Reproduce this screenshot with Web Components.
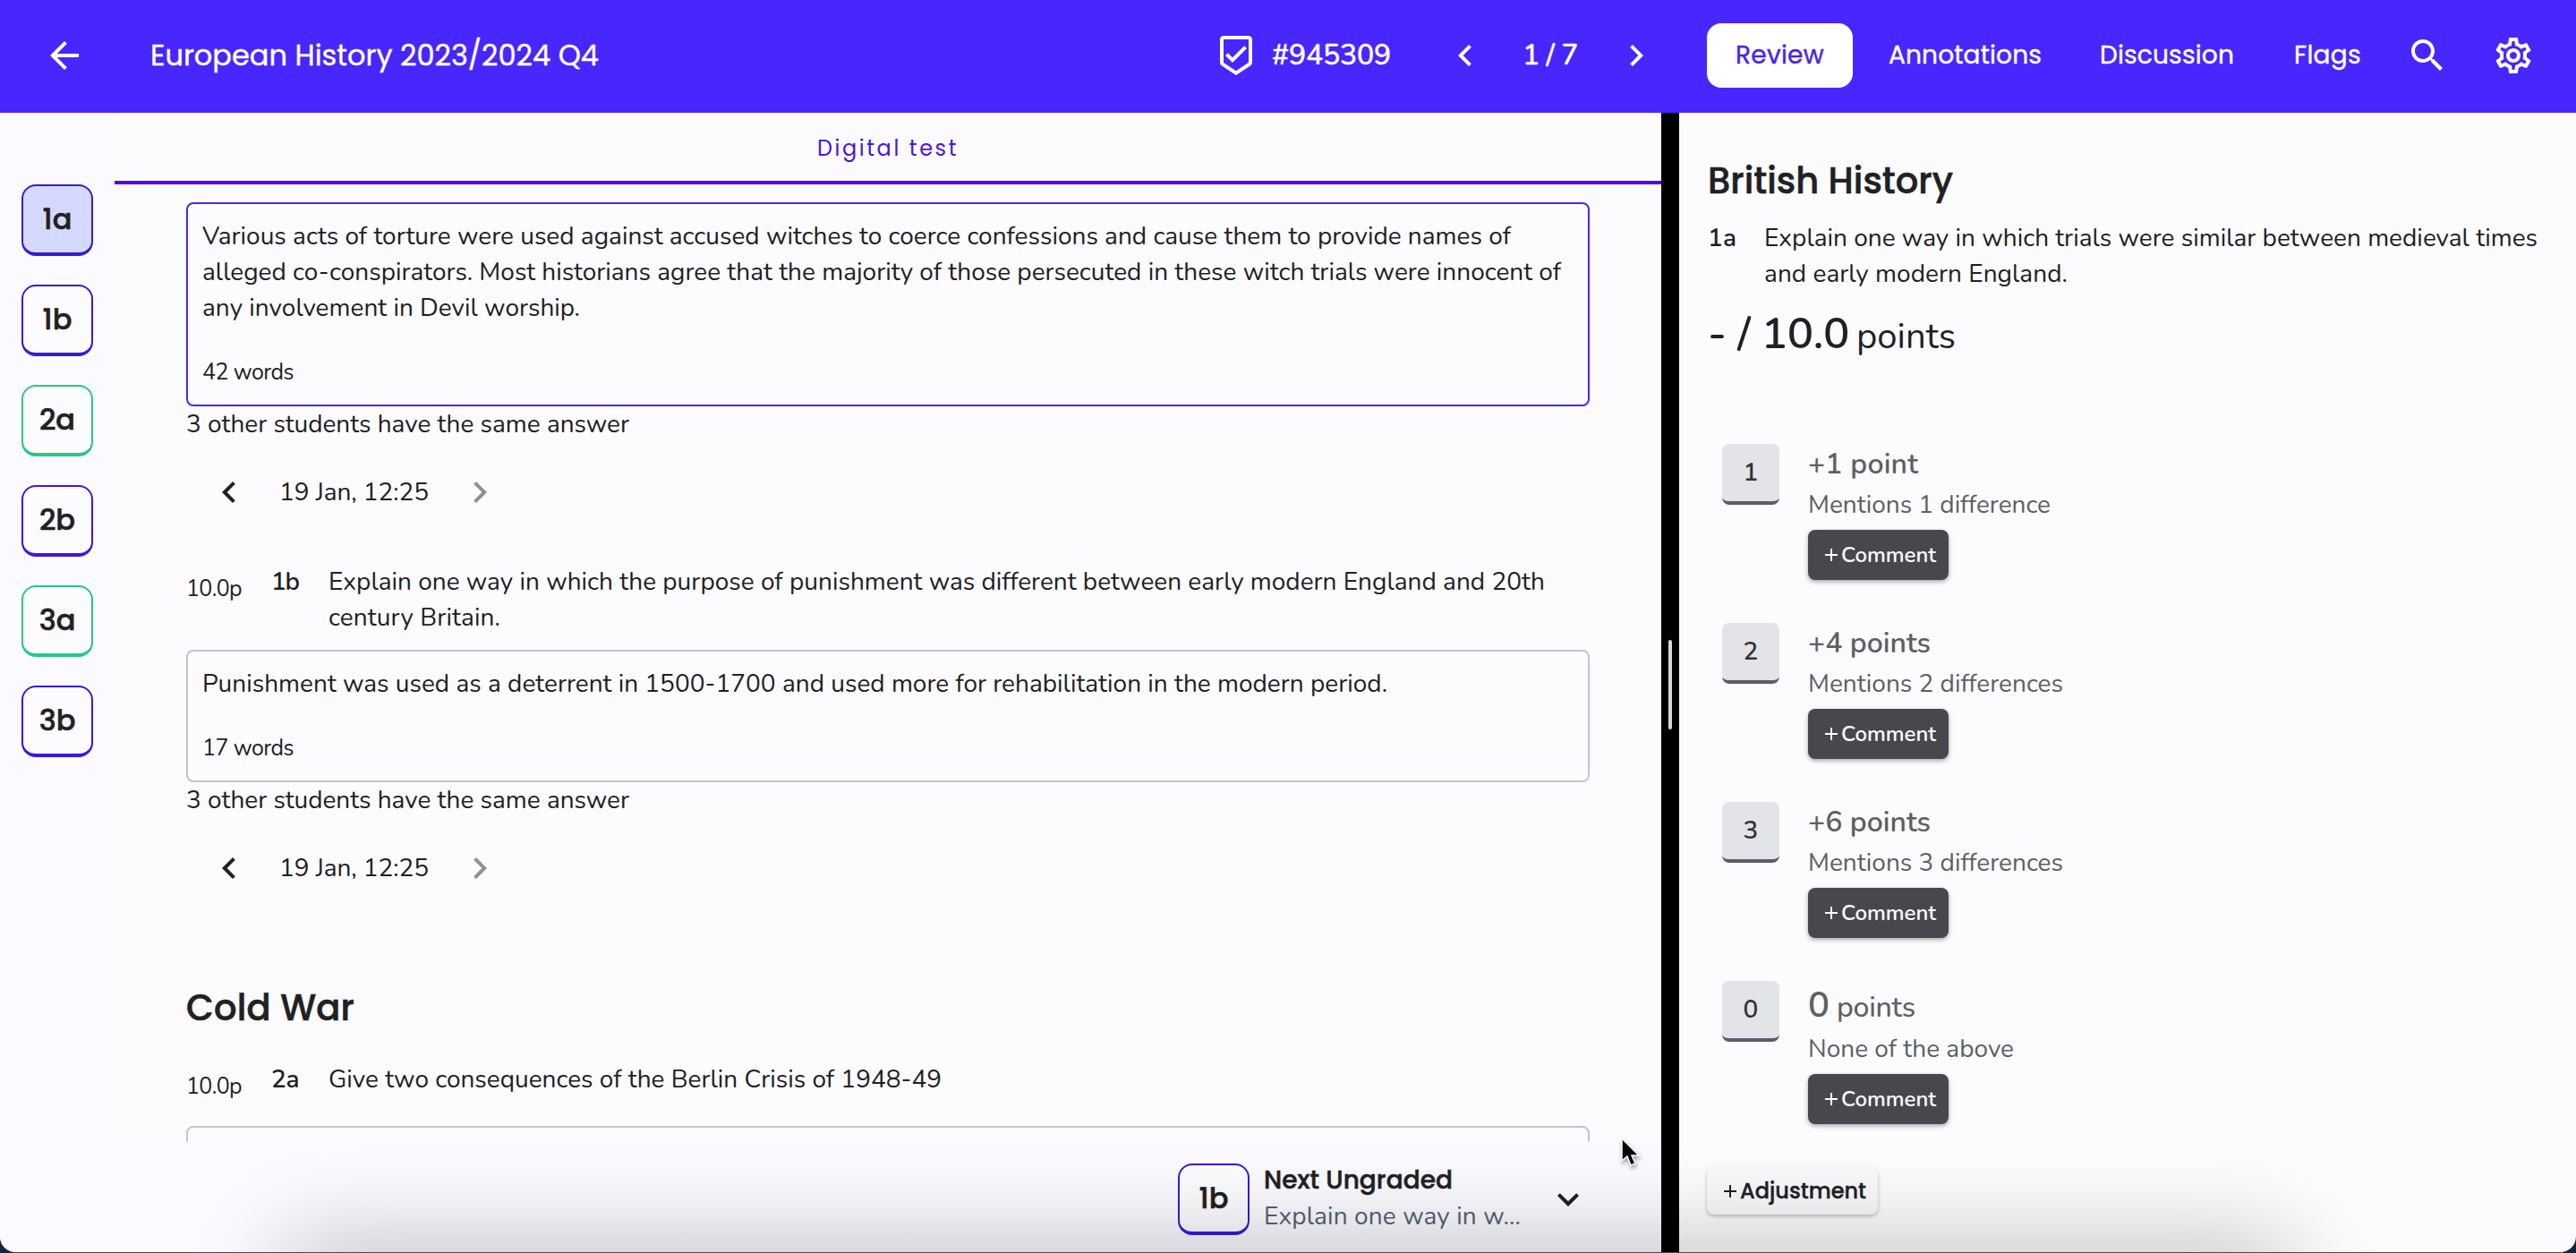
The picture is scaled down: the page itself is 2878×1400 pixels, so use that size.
<!DOCTYPE html>
<html lang="en">
<head>
<meta charset="utf-8">
<title>European History 2023/2024 Q4</title>
<style>
  :root {
    --brand: #4826ff;
    --brand-dark: #3a1ad6;
    --done: #2ac784;
    --ink: #1f2124;
    --muted: #5d6064;
    --paper: #fcfcff;
    --head: Poppins, Inter, "Liberation Sans", sans-serif;
    --text: Nunito, Lato, "Open Sans", sans-serif;
  }
  body {
    margin: 0;
    background: #10243f;
    font: 28px/40px var(--text);
    color: var(--ink);
  }
</style>
</head>
<body>
<grading-app></grading-app>

<script>
// Icon paths, all on a 24 x 24 grid
const ICONS = {
  back: 'M20 11H7.83l5.59-5.59L12 4l-8 8 8 8 1.41-1.41L7.83 13H20v-2z',
  badge: 'M19 1H5c-1.1 0-1.99.9-1.99 2L3 15.93c0 .69.35 1.3.88 1.66L12 23l8.11-5.41c.53-.36.88-.97.88-1.66L21 3c0-1.1-.9-2-2-2zm-7 19.6l-7-4.66V3h14v12.93l-7 4.67zm-2.01-7.42l-2.58-2.59L6 12l4 4 8-8-1.42-1.42z',
  left: 'M15.41 7.41L14 6l-6 6 6 6 1.41-1.41L10.83 12z',
  right: 'M10 6L8.59 7.41 13.17 12l-4.58 4.59L10 18l6-6z',
  down: 'M16.59 8.59L12 13.17 7.41 8.59 6 10l6 6 6-6z',
  search: 'M15.5 14h-.79l-.28-.27C15.41 12.59 16 11.11 16 9.5 16 5.91 13.09 3 9.5 3S3 5.91 3 9.5 5.91 16 9.5 16c1.61 0 3.09-.59 4.23-1.57l.27.28v.79l5 4.99L20.49 19l-4.99-5zm-6 0C7.01 14 5 11.99 5 9.5S7.01 5 9.5 5 14 7.01 14 9.5 11.99 14 9.5 14z',
  gear: 'M19.43 12.98c.04-.32.07-.64.07-.98s-.03-.66-.07-.98l2.11-1.65c.19-.15.24-.42.12-.64l-2-3.46c-.09-.16-.26-.25-.44-.25-.06 0-.12.01-.17.03l-2.49 1c-.52-.4-1.08-.73-1.69-.98l-.38-2.65C14.46 2.18 14.25 2 14 2h-4c-.25 0-.46.18-.49.42l-.38 2.65c-.61.25-1.17.59-1.69.98l-2.49-1c-.06-.02-.12-.03-.18-.03-.17 0-.34.09-.43.25l-2 3.46c-.13.22-.07.49.12.64l2.11 1.65c-.04.32-.07.65-.07.98s.03.66.07.98l-2.11 1.65c-.19.15-.24.42-.12.64l2 3.46c.09.16.26.25.44.25.06 0 .12-.01.17-.03l2.49-1c.52.4 1.08.73 1.69.98l.38 2.65c.03.24.24.42.49.42h4c.25 0 .46-.18.49-.42l.38-2.65c.61-.25 1.17-.59 1.69-.98l2.49 1c.06.02.12.03.18.03.17 0 .34-.09.43-.25l2-3.46c.12-.22.07-.49-.12-.64l-2.11-1.65zm-1.98-1.71c.04.31.05.52.05.73 0 .21-.02.43-.05.73l-.14 1.13.89.7 1.08.84-.7 1.21-1.27-.51-1.04-.42-.9.68c-.43.32-.84.56-1.25.73l-1.06.43-.16 1.13-.2 1.35h-1.4l-.19-1.35-.16-1.13-1.06-.43c-.43-.18-.83-.41-1.23-.71l-.91-.7-1.06.43-1.27.51-.7-1.21 1.08-.84.89-.7-.14-1.13c-.03-.31-.05-.54-.05-.74s.02-.43.05-.73l.14-1.13-.89-.7-1.08-.84.7-1.21 1.27.51 1.04.42.9-.68c.43-.32.84-.56 1.25-.73l1.06-.43.16-1.13.2-1.35h1.39l.19 1.35.16 1.13 1.06.43c.43.18.83.41 1.23.71l.91.7 1.06-.43 1.27-.51.7 1.21-1.07.85-.89.7.14 1.13zM12 8c-2.21 0-4 1.79-4 4s1.79 4 4 4 4-1.79 4-4-1.79-4-4-4zm0 6c-1.1 0-2-.9-2-2s.9-2 2-2 2 .9 2 2-.9 2-2 2z',
};

// Shared base: puts the element's template in an open shadow root
class BaseElement extends HTMLElement {
  constructor() {
    super();
    this.attachShadow({ mode: 'open' });
  }
  connectedCallback() {
    this.shadowRoot.innerHTML = this.render();
  }
}

class UiIcon extends BaseElement {
  render() {
    return `
      <style>
        :host { display: block; flex: none; width: 48px; height: 48px; }
        svg { display: block; width: 100%; height: 100%; fill: currentColor; }
      </style>
      <svg viewBox="0 0 24 24"><path d="${ICONS[this.getAttribute('name')]}"/></svg>`;
  }
}

// One line of text, tracked so that it fills the width given in w
class TextLine extends BaseElement {
  connectedCallback() {
    super.connectedCallback();
    const span = this.shadowRoot.querySelector('span');
    const target = Number(this.getAttribute('w'));
    const count = this.textContent.length;
    const natural = span.getBoundingClientRect().width;
    span.style.letterSpacing = ((target - natural) / count).toFixed(3) + 'px';
  }
  render() {
    return `
      <style>
        :host { display: block; flex: none; width: ${this.getAttribute('w')}px; white-space: nowrap; }
        span { display: inline-block; }
      </style>
      <span><slot></slot></span>`;
  }
}

class QuestionTile extends BaseElement {
  render() {
    return `
      <style>
        :host {
          display: flex; flex: none; align-items: center; justify-content: center;
          box-sizing: border-box; width: 80px; height: 80px;
          border: 2px solid var(--brand-dark); border-bottom-width: 4px; border-radius: 16px;
          background: var(--paper);
          font: 500 32px/40px var(--head); -webkit-text-stroke: .6px;
        }
        :host([active]) { background: #d6d9ff; }
        :host([done]) { border-color: var(--done); }
      </style>
      <slot></slot>`;
  }
}

class AppHeader extends BaseElement {
  render() {
    return `
      <style>
        :host {
          display: flex; align-items: center; box-sizing: border-box; height: 126px;
          padding: 0 46px 2px 48px; background: var(--brand); color: #fff;
          font-family: var(--head); -webkit-text-stroke: .4px;
        }
        .title { margin-left: 72px; font-size: 32px; }
        .student { display: flex; align-items: center; margin-left: auto; font: 500 32px/40px var(--text); }
        .student ui-icon:first-child { margin-right: 16px; }
        .student .prev { margin: 0 40px 0 59px; }
        .student .next { margin-left: 41px; }
        nav { display: flex; align-items: center; margin-left: 55px; font-size: 28px; }
        .pill {
          display: flex; align-items: center; justify-content: center;
          width: 163px; height: 72px; margin-right: 40px; border-radius: 16px;
          background: #fff; color: #4826e6;
        }
        ui-icon { -webkit-text-stroke: 0; }
      </style>
      <ui-icon name="back"></ui-icon>
      <text-line class="title" w="501">European History 2023/2024 Q4</text-line>
      <div class="student">
        <ui-icon name="badge"></ui-icon>
        <text-line w="133">#945309</text-line>
        <ui-icon class="prev" name="left"></ui-icon>
        <text-line w="62">1 / 7</text-line>
        <ui-icon class="next" name="right"></ui-icon>
      </div>
      <nav>
        <div class="pill"><text-line w="99">Review</text-line></div>
        <text-line w="171">Annotations</text-line>
        <text-line w="150" style="margin-left: 65px">Discussion</text-line>
        <text-line w="75" style="margin-left: 67px">Flags</text-line>
        <ui-icon name="search" style="margin-left: 50px"></ui-icon>
        <ui-icon name="gear" style="margin-left: 48px"></ui-icon>
      </nav>`;
  }
}

class QuestionRail extends BaseElement {
  render() {
    return `
      <style>
        :host {
          display: flex; flex-direction: column; align-items: center; gap: 32px;
          box-sizing: border-box; width: 128px; padding-top: 80px; background: #fafaff;
        }
      </style>
      <question-tile active>1a</question-tile>
      <question-tile>1b</question-tile>
      <question-tile done>2a</question-tile>
      <question-tile>2b</question-tile>
      <question-tile done>3a</question-tile>
      <question-tile>3b</question-tile>`;
  }
}

class AnswerBox extends BaseElement {
  render() {
    const words = this.getAttribute('words');
    return `
      <style>
        :host {
          display: block; box-sizing: border-box; width: 1568px; min-height: 148px; padding: 16px 16px 18px;
          border: 2px solid #c4c4cc; border-radius: 8px;
        }
        :host([active]) { border-color: var(--brand); }
        .count { margin-top: 34px; font-size: 25px; line-height: 36px; }
      </style>
      <slot></slot>
      ${words ? `<text-line class="count" w="102">${words} words</text-line>` : ''}`;
  }
}

class AnswerMeta extends BaseElement {
  render() {
    return `
      <style>
        :host { display: block; }
        .history { display: flex; align-items: center; margin: 32px 0 0 24px; }
        .date { margin: 0 33px 0 32px; }
        .off { color: #919191; }
      </style>
      <text-line w="495">3 other students have the same answer</text-line>
      <div class="history">
        <ui-icon name="left"></ui-icon>
        <text-line class="date" w="167">19 Jan, 12:25</text-line>
        <ui-icon class="off" name="right"></ui-icon>
      </div>`;
  }
}

class QuestionRow extends BaseElement {
  render() {
    return `
      <style>
        :host { display: flex; min-height: 56px; padding-bottom: 16px; }
        .pts { margin-right: 33px; padding-top: 8px; font-size: 25px; }
        .num { margin-right: 33px; font-weight: 650; }
      </style>
      <text-line class="pts" w="62">10.0p</text-line>
      <text-line class="num" w="31">${this.getAttribute('num')}</text-line>
      <div><slot></slot></div>`;
  }
}

class NextUngraded extends BaseElement {
  render() {
    return `
      <style>
        :host {
          display: flex; justify-content: flex-end; box-sizing: border-box;
          height: 124px; padding: 24px 80px 0 0; background: #fafaff;
        }
        .info { width: 316px; margin: -1px 0 0 16px; }
        .label { font: 500 28px/40px var(--head); -webkit-text-stroke: .5px; }
        .preview { color: #566273; }
        ui-icon { margin-top: 16px; }
      </style>
      <question-tile>1b</question-tile>
      <div class="info">
        <text-line class="label" w="211">Next Ungraded</text-line>
        <text-line class="preview" w="287">Explain one way in w...</text-line>
      </div>
      <ui-icon name="down"></ui-icon>`;
  }
}

class TestPane extends BaseElement {
  render() {
    return `
      <style>
        :host { display: flex; flex-direction: column; width: 1728px; }
        .tab {
          display: flex; flex: none; justify-content: center; box-sizing: border-box; height: 80px;
          padding-top: 20px; border-bottom: 4px solid #5500e6; color: #4d14d9;
          font-family: var(--head); font-size: 24px;
        }
        .sheet { flex: 1; min-height: 0; overflow: hidden; padding: 20px 0 0 80px; }
        question-row { margin-top: 56px; }
        .section { margin: 102px 0 30px; font: 500 40px/60px var(--head); -webkit-text-stroke: .6px; }
        .section + question-row { margin-top: 0; }
      </style>
      <div class="tab"><text-line w="158">Digital test</text-line></div>
      <div class="sheet">
        <answer-box active words="42">
          <text-line w="1462">Various acts of torture were used against accused witches to coerce confessions and cause them to provide names of</text-line>
          <text-line w="1518">alleged co-conspirators. Most historians agree that the majority of those persecuted in these witch trials were innocent of</text-line>
          <text-line w="422">any involvement in Devil worship.</text-line>
        </answer-box>
        <answer-meta></answer-meta>
        <question-row num="1b">
          <text-line w="1359">Explain one way in which the purpose of punishment was different between early modern England and 20th</text-line>
          <text-line w="192">century Britain.</text-line>
        </question-row>
        <answer-box words="17">
          <text-line w="1324">Punishment was used as a deterrent in 1500-1700 and used more for rehabilitation in the modern period.</text-line>
        </answer-box>
        <answer-meta></answer-meta>
        <text-line class="section" w="188">Cold War</text-line>
        <question-row num="2a">
          <text-line w="685">Give two consequences of the Berlin Crisis of 1948-49</text-line>
        </question-row>
        <answer-box></answer-box>
      </div>`;
  }
}

class PaneDivider extends BaseElement {
  render() {
    return `
      <style>
        :host { display: flex; align-items: center; justify-content: center; width: 20px; background: #000; }
        i { width: 4px; height: 100px; margin-top: 4px; border-radius: 2px; background: #d8d8d8; }
      </style>
      <i></i>`;
  }
}

class AddButton extends BaseElement {
  render() {
    return `
      <style>
        :host {
          display: flex; align-items: center; box-sizing: border-box; width: 157px; height: 56px;
          padding-left: 18px; border-radius: 8px; background: #48484c; color: #fff;
          box-shadow: 0 2px 5px rgba(0, 0, 0, .35); font-weight: 600; font-size: 24px;
        }
        :host([light]) {
          width: 191px; height: 53px; background: #f9f9fc; color: var(--ink);
          font-family: var(--head); font-weight: 500; font-size: 24px;
          box-shadow: 0 2px 4px rgba(0, 0, 0, .25); -webkit-text-stroke: .4px;
        }
        svg { flex: none; width: 16px; height: 16px; margin-right: 3px; stroke: currentColor; stroke-width: 2; }
      </style>
      <svg viewBox="0 0 16 16"><path d="M1 8h14M8 1v14"/></svg>
      <slot></slot>`;
  }
}

class RubricItem extends BaseElement {
  render() {
    return `
      <style>
        :host { display: flex; min-height: 200px; color: var(--muted); }
        .key {
          display: flex; flex: none; align-items: center; justify-content: center; box-sizing: border-box;
          width: 64px; height: 68px; margin: 0 32px 0 16px;
          border-bottom: 4px solid #5b5d6a; border-radius: 8px;
          background: #e3e4e8; color: #333; font-weight: 600;
        }
        .points { padding: 3px 0 5px; font-weight: 650; font-size: 32px; }
        .body ::slotted(text-line:not([slot])) { margin-bottom: 8px; }
      </style>
      <div class="key">${this.getAttribute('key')}</div>
      <div class="body">
        <div class="points"><slot name="points"></slot></div>
        <slot></slot>
        <add-button><text-line w="106">Comment</text-line></add-button>
      </div>`;
  }
}

class RubricPane extends BaseElement {
  render() {
    return `
      <style>
        :host { display: block; box-sizing: border-box; flex: 1; padding: 46px 0 0 32px; }
        .title { font: 500 40px/60px var(--head); -webkit-text-stroke: .6px; }
        .question { display: flex; margin-top: 14px; }
        .num { margin-right: 31px; font-weight: 650; }
        .score { display: flex; align-items: baseline; height: 64px; margin: 15px 0 91px; gap: 8px; line-height: 64px; font-size: 40px; }
        .score .big { font-weight: 650; font-size: 49px; }
        .zero { display: flex; align-items: baseline; gap: 8px; height: 48px; line-height: 48px; font-weight: 500; }
        .zero .big { font-weight: 650; font-size: 40px; }
        rubric-item:last-of-type { min-height: 160px; margin-bottom: 48px; }
        add-button { margin-left: -1px; }
      </style>
      <text-line class="title" w="274">British History</text-line>
      <div class="question">
        <text-line class="num" w="32">1a</text-line>
        <div>
          <text-line w="864">Explain one way in which trials were similar between medieval times</text-line>
          <text-line w="339">and early modern England.</text-line>
        </div>
      </div>
      <div class="score">
        <text-line class="big" w="158">- / 10.0</text-line>
        <text-line w="111">points</text-line>
      </div>
      <rubric-item key="1">
        <text-line slot="points" w="123">+1 point</text-line>
        <text-line w="271">Mentions 1 difference</text-line>
      </rubric-item>
      <rubric-item key="2">
        <text-line slot="points" w="137">+4 points</text-line>
        <text-line w="285">Mentions 2 differences</text-line>
      </rubric-item>
      <rubric-item key="3">
        <text-line slot="points" w="137">+6 points</text-line>
        <text-line w="285">Mentions 3 differences</text-line>
      </rubric-item>
      <rubric-item key="0">
        <div slot="points" class="zero">
          <text-line class="big" w="24">0</text-line>
          <text-line w="88">points</text-line>
        </div>
        <text-line w="230">None of the above</text-line>
      </rubric-item>
      <add-button light><text-line w="141">Adjustment</text-line></add-button>`;
  }
}

class GradingApp extends BaseElement {
  render() {
    return `
      <style>
        :host {
          display: block; position: relative; overflow: hidden; box-sizing: border-box;
          width: 2878px; height: 1400px; border-bottom: 1px solid #4c4c48;
          border-radius: 0 0 18px 18px; background: var(--paper);
        }
        main { display: flex; height: 1274px; }
        .left { display: flex; flex-direction: column; width: 1856px; }
        .top { display: flex; flex: 1; min-height: 0; }
        /* soft shade rising from under the window's lower edge */
        .shade {
          position: absolute; left: 330px; right: 330px; bottom: -60px; height: 50px;
          box-shadow: 0 0 110px 10px rgba(0, 0, 0, .32); pointer-events: none;
        }
        .pointer { position: absolute; left: 1808px; top: 1270px; width: 28px; height: 40px; filter: drop-shadow(1px 3px 2px rgba(0, 0, 0, .35)); }
      </style>
      <app-header></app-header>
      <main>
        <div class="left">
          <div class="top">
            <question-rail></question-rail>
            <test-pane></test-pane>
          </div>
          <next-ungraded></next-ungraded>
        </div>
        <pane-divider></pane-divider>
        <rubric-pane></rubric-pane>
      </main>
      <div class="shade"></div>
      <svg class="pointer" viewBox="0 0 28 40">
        <path d="M4 2v25l6-5 4 10 5-2-4-9h8z" fill="#000" stroke="#fff" stroke-width="1.5"/>
      </svg>`;
  }
}

customElements.define('grading-app', GradingApp);
customElements.define('app-header', AppHeader);
customElements.define('question-rail', QuestionRail);
customElements.define('test-pane', TestPane);
customElements.define('next-ungraded', NextUngraded);
customElements.define('pane-divider', PaneDivider);
customElements.define('rubric-pane', RubricPane);
customElements.define('rubric-item', RubricItem);
customElements.define('answer-box', AnswerBox);
customElements.define('answer-meta', AnswerMeta);
customElements.define('question-row', QuestionRow);
customElements.define('question-tile', QuestionTile);
customElements.define('add-button', AddButton);
customElements.define('ui-icon', UiIcon);
// last, so every line is measured inside its finished parent
customElements.define('text-line', TextLine);
</script>
</body>
</html>
